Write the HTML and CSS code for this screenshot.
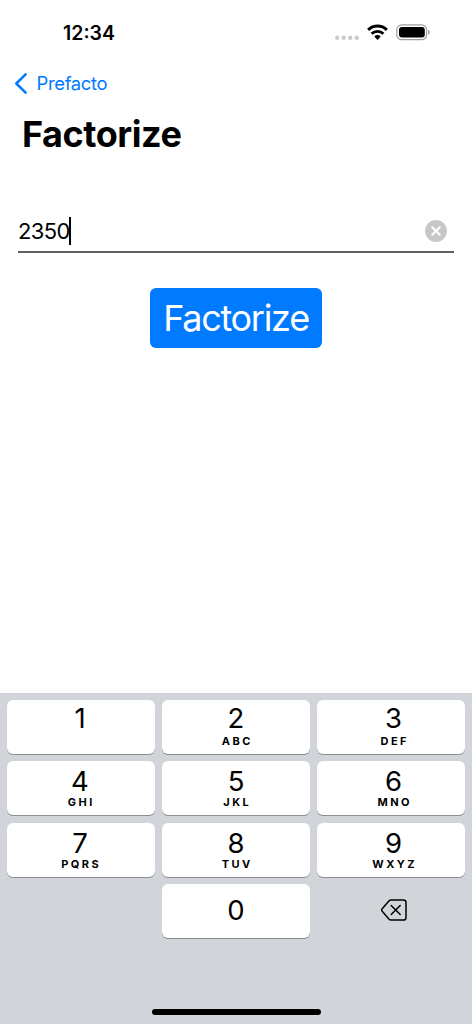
FILE: index.html
```html
<!DOCTYPE html>
<html lang="en">
<head>
<meta charset="utf-8">
<title>Factorize</title>
<link rel="stylesheet" href="styles.css">
</head>
<body>
<div class="screen">
  <header class="status">
    <span class="time">12:34</span>
    <svg class="status-icons" width="98" height="20" viewBox="0 0 98 20">
      <g fill="#cbcbcb"><circle cx="3.2" cy="14.8" r="2.2"/><circle cx="9.7" cy="14.8" r="2.2"/><circle cx="16.3" cy="14.8" r="2.2"/><circle cx="22.8" cy="14.8" r="2.2"/></g>
      <g fill="none" stroke="#000" stroke-width="2.9">
        <path d="M34.1 6.9a13.4 13.4 0 0 1 18.8 0"/>
        <path d="M37.6 10.8a8.5 8.5 0 0 1 11.8 0"/>
      </g>
      <path d="M40.3 13.6a4.7 4.7 0 0 1 6.4 0L43.5 16.9z"/>
      <rect x="62.8" y="1.9" width="29.8" height="14.8" rx="4.8" fill="none" stroke="#a0a0a0" stroke-width="1.2"/>
      <rect x="65" y="4" width="25.8" height="10.6" rx="3"/>
      <path d="M94.1 6.8c2.3.8 2.3 4.2 0 5z" fill="#a0a0a0"/>
    </svg>
  </header>
  <nav class="nav">
    <svg width="14" height="22" viewBox="0 0 14 22"><path d="M11.6 1.3 2.3 10.5l9.3 9.2" fill="none" stroke="#007aff" stroke-width="2.5" stroke-linecap="round" stroke-linejoin="round"/></svg>
    <span class="back">Prefacto</span>
  </nav>
  <h1 class="title">Factorize</h1>
  <div class="field">
    <span class="value">2350</span><span class="caret"></span>
    <svg class="clear" width="22" height="22" viewBox="0 0 22 22"><circle cx="11" cy="11" r="10.9" fill="#c7c7c7"/><path d="m7.2 7.2 7.6 7.6m0-7.6-7.6 7.6" stroke="#fff" stroke-width="2" stroke-linecap="round"/></svg>
  </div>
  <button class="action">Factorize</button>
  <div class="keyboard">
    <div class="keys">
      <div class="key first left"><b>1</b></div>
      <div class="key first"><b>2</b><i>ABC</i></div>
      <div class="key first right"><b>3</b><i>DEF</i></div>
      <div class="key left"><b>4</b><i>GHI</i></div>
      <div class="key"><b>5</b><i>JKL</i></div>
      <div class="key right"><b>6</b><i>MNO</i></div>
      <div class="key left"><b>7</b><i>PQRS</i></div>
      <div class="key"><b>8</b><i>TUV</i></div>
      <div class="key right"><b>9</b><i>WXYZ</i></div>
      <div></div>
      <div class="key zero"><b>0</b></div>
      <div class="delete">
        <svg width="28" height="24" viewBox="0 0 28 24" fill="none" stroke="#000" stroke-width="1.5" stroke-linecap="round" stroke-linejoin="round"><path d="M11 2H23.4a2.6 2.6 0 0 1 2.6 2.6v14.8a2.6 2.6 0 0 1-2.6 2.6H11a2.6 2.6 0 0 1-1.9-.8L2.2 13.3a1.8 1.8 0 0 1 0-2.6L9.1 2.8A2.6 2.6 0 0 1 11 2z"/><path d="m11.2 7.5 9 9m0-9-9 9"/></svg>
      </div>
    </div>
    <div class="home"></div>
  </div>
</div>
</body>
</html>
```
FILE: styles.css
```css
* { box-sizing: border-box; }
body { margin: 0; background: #fff; color: #000; font-family: Inter, "Liberation Sans", sans-serif; }
.screen { width: 472px; height: 1024px; display: flex; flex-direction: column; overflow: hidden; }
.status { height: 65px; flex: none; display: flex; justify-content: space-between; align-items: center; padding: 0 40px 0 63px; }
.time { font-size: 19.5px; font-weight: 600; letter-spacing: 0; }
.status-icons { display: block; }
.nav { height: 37px; flex: none; display: flex; align-items: center; gap: 8.6px; padding-left: 14px; }
.back { color: #007aff; font-size: 18.4px; letter-spacing: -0.35px; line-height: 22px; padding-bottom: 2px; }
.title { margin: 0; height: 64px; flex: none; padding-left: 22px; font-size: 36px; line-height: 64px; font-weight: 700; letter-spacing: -0.45px; }
.field { height: 42px; flex: none; margin: 45px 18px 0; padding-right: 7px; display: flex; align-items: center; border-bottom: 2px solid #606060; }
.value { font-size: 22px; letter-spacing: -0.6px; }
.caret { width: 2px; height: 28px; background: #000; margin-left: -0.6px; }
.clear { margin-left: auto; }
.action { width: 171.5px; height: 60px; flex: none; margin: 35px auto 0; padding: 0; border: 0; border-radius: 6px; background: #007aff; color: #fff; font: 400 36px/60px Inter, sans-serif; letter-spacing: -1.3px; }
.keyboard { margin-top: auto; height: 331px; flex: none; padding: 6.5px 7px 0; background: #d1d4d9; display: flex; flex-direction: column; justify-content: space-between; }
.keys { display: grid; grid-template-columns: repeat(3, 148px); grid-auto-rows: 54px; gap: 7.5px 7px; }
.key { background: #fff; border-radius: 6px; box-shadow: 0 1px 0 #8b8d91; display: flex; flex-direction: column; align-items: center; padding-top: 5px; }
.key.first { padding-top: 3px; }
.key.left { padding-right: 2px; }
.key.right { padding-left: 5px; }
.key b { font-size: 27.5px; line-height: 30px; font-weight: 400; }
.key i { font-size: 11px; line-height: 12px; font-style: normal; font-weight: 700; letter-spacing: 2.5px; margin-right: -2.5px; }
.key.first i { margin-top: 2px; }
.key.zero { padding-top: 11px; }
.delete { display: flex; align-items: center; justify-content: center; padding: 0 0 2px 5px; }
.home { width: 169px; height: 6px; margin: 0 auto 9px; border-radius: 3px; background: #000; }
```
